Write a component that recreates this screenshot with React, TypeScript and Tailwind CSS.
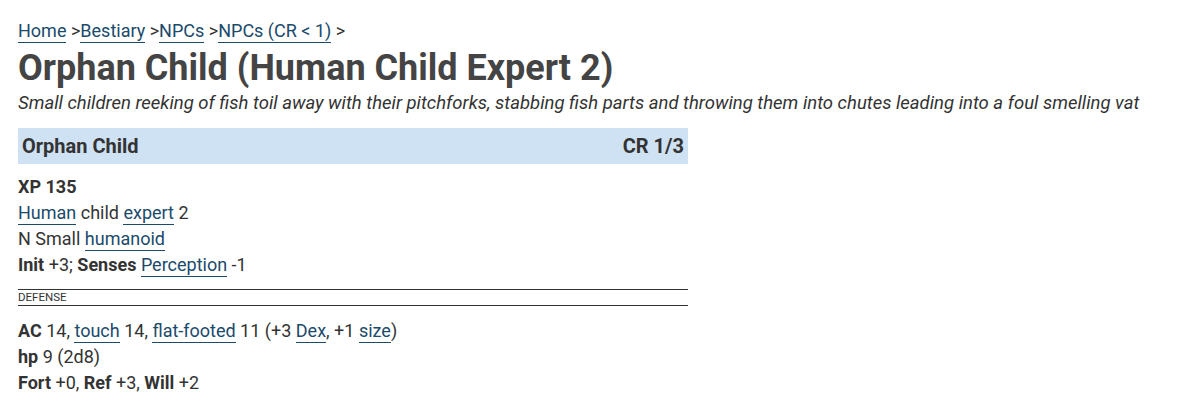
import React from 'react';

const A = ({ children }: { children: React.ReactNode }) => (
  <a href="#" className="text-[#1b4a6b] border-b border-[#1b4a6b] pb-[1px]">
    {children}
  </a>
);

export default function App() {
  return (
    <div className="px-[18px] pt-[18px] text-[#333] font-['Roboto',sans-serif] text-[18px] leading-[26px] bg-white min-h-[402px]">
      <div className="leading-[26px]">
        <A>Home</A> &gt;<A>Bestiary</A> &gt;<A>NPCs</A> &gt;<A>NPCs (CR &lt; 1)</A> &gt;
      </div>
      <h1 className="text-[36px] leading-[48px] font-bold text-[#444]">Orphan Child (Human Child Expert 2)</h1>
      <p className="italic text-[18.5px] leading-[22px] text-[#333]">
        Small children reeking of fish toil away with their pitchforks, stabbing fish parts and throwing them into chutes leading into a foul smelling vat
      </p>
      <div className="w-[670px] mt-[14px]">
        <div className="flex justify-between items-center bg-[#cfe2f3] h-[36px] px-[4px] font-bold text-[20px] text-[#333]">
          <span>Orphan Child</span>
          <span>CR 1/3</span>
        </div>
        <div className="pt-[10px]">
          <div className="font-bold">XP 135</div>
          <div><A>Human</A> child <A>expert</A> 2</div>
          <div>N Small <A>humanoid</A></div>
          <div><b>Init</b> +3; <b>Senses</b> <A>Perception</A> -1</div>
        </div>
        <div className="mt-[11px] border-t border-b border-[#333] text-[11.5px] leading-[15px] uppercase">Defense</div>
        <div className="pt-[12px]">
          <div><b>AC</b> 14, <A>touch</A> 14, <A>flat-footed</A> 11 (+3 <A>Dex</A>, +1 <A>size</A>)</div>
          <div><b>hp</b> 9 (2d8)</div>
          <div><b>Fort</b> +0, <b>Ref</b> +3, <b>Will</b> +2</div>
        </div>
      </div>
    </div>
  );
}
